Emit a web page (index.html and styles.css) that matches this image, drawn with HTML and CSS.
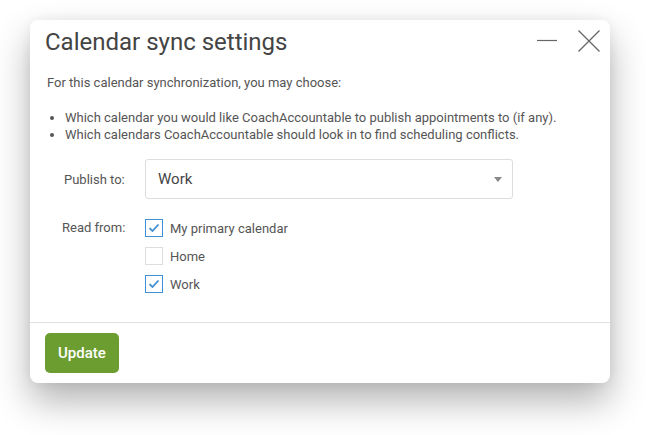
FILE: index.html
```html
<!DOCTYPE html>
<html lang="en">
  <head>
    <meta charset="UTF-8" />
    <title>Calendar sync settings</title>
    <link rel="stylesheet" href="styles.css">
  </head>
  <body>
    <div class="page">
      <div class="dialog">
        <div class="dialog-head">
          <h1 class="dialog-title">Calendar sync settings</h1>
          <div class="dialog-tools">
            <a class="tool-min" title="Minimize"><svg width="22" height="22" viewBox="0 0 22 22"><path d="M1 10.5H21" stroke="#666" stroke-width="1.2" fill="none"/></svg></a>
            <a class="tool-close" title="Close"><svg width="24" height="24" viewBox="0 0 24 24"><path d="M1.5 1.5L22.5 22.5M22.5 1.5L1.5 22.5" stroke="#666" stroke-width="1.3" fill="none"/></svg></a>
          </div>
        </div>
        <div class="dialog-body">
          <p class="intro">For this calendar synchronization, you may choose:</p>
          <ul class="choices">
            <li>Which calendar you would like CoachAccountable to publish appointments to (if any).</li>
            <li>Which calendars CoachAccountable should look in to find scheduling conflicts.</li>
          </ul>
          <div class="form-row">
            <label class="form-label">Publish to:</label>
            <div class="select">
              <span>Work</span>
              <span class="caret"></span>
            </div>
          </div>
          <div class="form-row read-row">
            <label class="form-label">Read from:</label>
            <div class="checks">
              <label class="check"><span class="box on"><svg width="12" height="10" viewBox="0 0 12 10"><path d="M1.5 5.2L4.5 8L10.5 1.5" stroke="#3d8fd6" stroke-width="1.8" fill="none"/></svg></span>My primary calendar</label>
              <label class="check"><span class="box"></span>Home</label>
              <label class="check"><span class="box on"><svg width="12" height="10" viewBox="0 0 12 10"><path d="M1.5 5.2L4.5 8L10.5 1.5" stroke="#3d8fd6" stroke-width="1.8" fill="none"/></svg></span>Work</label>
            </div>
          </div>
        </div>
        <div class="dialog-foot">
          <button class="btn-update">Update</button>
        </div>
      </div>
    </div>
  </body>
</html>
```

FILE: styles.css
```css
* {
  box-sizing: border-box;
}

html,
body {
  height: 100%;
}

body {
  margin: 0;
  background: #ffffff;
  font-family: Roboto, "Liberation Sans", sans-serif;
  color: #555555;
}

.page {
  min-height: 100%;
  padding: 20px 36px 40px 30px;
}

.dialog {
  width: 580px;
  background: #ffffff;
  border-radius: 8px;
  box-shadow: 0 18px 36px rgba(0, 0, 0, 0.3), 0 0 12px rgba(0, 0, 0, 0.06);
}

.dialog-head {
  display: flex;
  align-items: flex-start;
  justify-content: space-between;
  padding: 7px 9px 0 15px;
}

.dialog-title {
  margin: 0;
  font-size: 24px;
  font-weight: 400;
  line-height: 30px;
  color: #444444;
}

.dialog-tools {
  display: flex;
  align-items: center;
  gap: 19px;
  margin-top: 2px;
}

.dialog-tools a {
  display: block;
  cursor: pointer;
}

.dialog-tools svg {
  display: block;
}

.dialog-body {
  padding: 0 15px 24px 15px;
  font-size: 13px;
}

.intro {
  margin: 17px 0 0 2px;
  line-height: 17px;
}

.choices {
  margin: 18px 0 0 0;
  padding-left: 20px;
  line-height: 17px;
}

.form-row {
  display: flex;
  align-items: center;
  margin-top: 16px;
}

.form-label {
  width: 100px;
  padding-left: 19px;
  font-size: 13px;
}

.select {
  width: 368px;
  height: 40px;
  border: 1px solid #dddddd;
  border-radius: 3px;
  display: flex;
  align-items: center;
  justify-content: space-between;
  padding: 0 10px 0 12px;
  font-size: 15px;
  color: #444444;
}

.caret {
  width: 0;
  height: 0;
  border-left: 4px solid transparent;
  border-right: 4px solid transparent;
  border-top: 5px solid #888888;
}

.read-row {
  align-items: flex-start;
  margin-top: 15px;
}

.read-row .form-label {
  padding-left: 17px;
  line-height: 28px;
}

.checks {
  display: flex;
  flex-direction: column;
}

.check {
  display: flex;
  align-items: center;
  height: 28px;
  font-size: 13px;
}

.box {
  width: 18px;
  height: 18px;
  border: 1px solid #dddddd;
  margin-right: 7px;
  display: flex;
  align-items: center;
  justify-content: center;
}

.box.on {
  border-color: #3d8fd6;
}

.dialog-foot {
  border-top: 1px solid #e0e0e0;
  padding: 10px 15px 10px 15px;
}

.btn-update {
  display: block;
  height: 40px;
  padding: 0 13px;
  border: 0;
  border-radius: 5px;
  background: #6c9d30;
  color: #ffffff;
  font-family: Roboto, "Liberation Sans", sans-serif;
  font-size: 15px;
  font-weight: 500;
  cursor: pointer;
}
```
